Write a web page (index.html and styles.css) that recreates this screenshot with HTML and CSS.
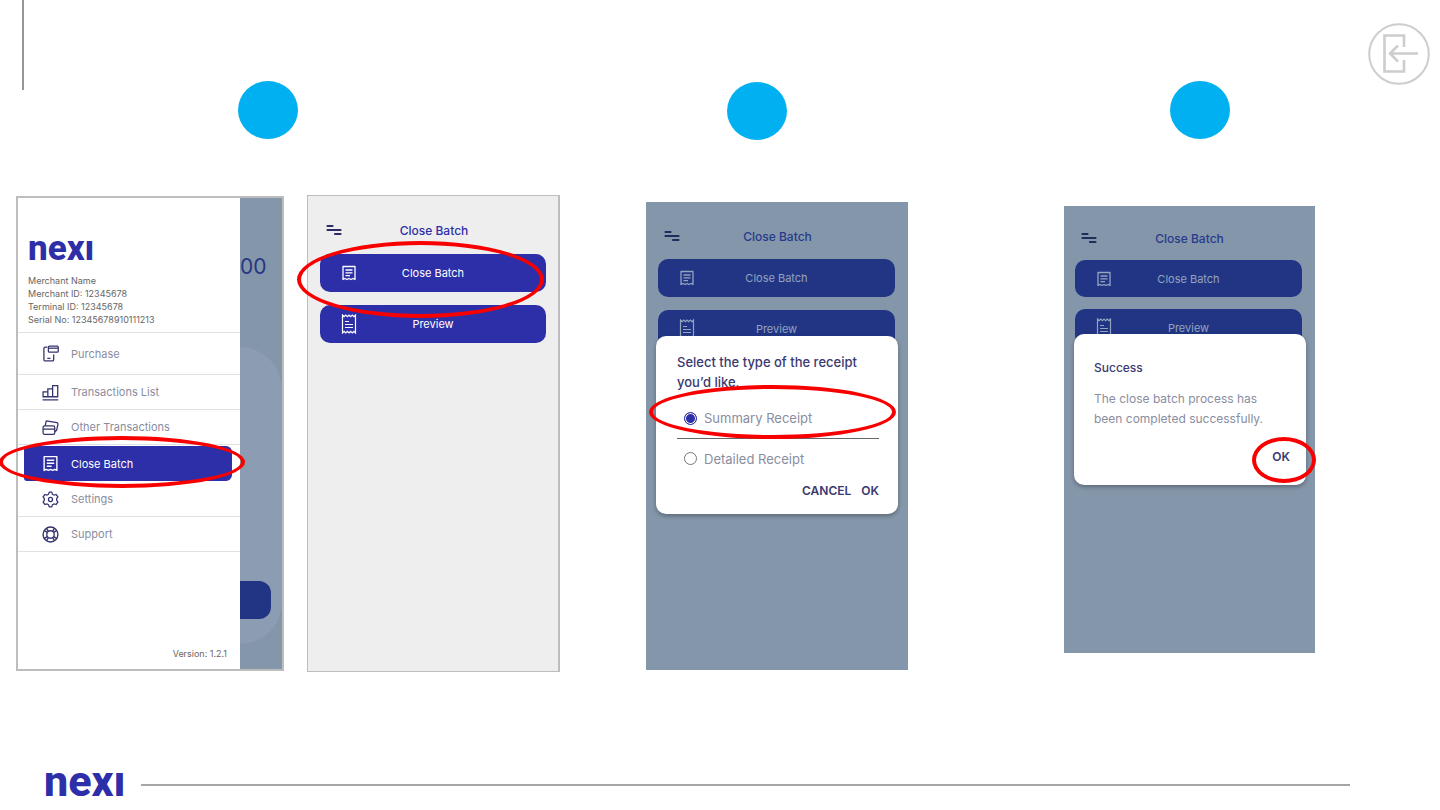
FILE: index.html
```
<!DOCTYPE html>
<html lang="en">
<head>
    <meta charset="UTF-8">
    <meta name="viewport" content="width=device-width, initial-scale=1.0">
    <title>Nexi - Close Batch</title>
    <link rel="stylesheet" href="styles.css">
</head>
<body>
    <!-- shared icons -->
    <svg class="sprite" aria-hidden="true">
        <symbol id="icon-menu" viewBox="0 0 16 12">
            <path d="M1.5 2h5M1.5 6h13M9 10h5.5" fill="none" stroke="currentColor" stroke-width="2.2" stroke-linecap="round"/>
        </symbol>
        <symbol id="icon-batch" viewBox="0 0 16 16">
            <path d="M2 1.5h12v13l-2-1-2 1-2-1-2 1-2-1-2 1zM4.500 5h7M4.500 7.800h7M4.500 10.600h4.500" fill="none" stroke="currentColor" stroke-width="1.3" stroke-linejoin="round"/>
        </symbol>
        <symbol id="icon-preview" viewBox="0 0 16 20">
            <path d="M1.5 1l1.6 1.6L4.7 1l1.7 1.6L8 1l1.6 1.6L11.3 1l1.6 1.6L14.5 1v18l-1.6-1.6-1.6 1.6-1.7-1.6L8 19l-1.6-1.6L4.7 19l-1.6-1.6L1.5 19zM4 7.5h4M4 10.5h8M4 13.5h8" fill="none" stroke="currentColor" stroke-width="1.2"/>
        </symbol>
    </svg>

    <header class="page-header">
        <div class="header-line"></div>
        <a class="exit-link" href="#" aria-label="Exit">
            <svg viewBox="0 0 62 62" fill="none" stroke="#cdcdcd">
                <circle cx="31" cy="31" r="29.8" stroke-width="2"/>
                <path d="M36 24V12.5H16.500V48.500H36V37" stroke-width="2.600"/>
                <path d="M50 30.500H22M30 22.500l-8 8 8 8" stroke-width="2.500"/>
            </svg>
        </a>
    </header>

    <main class="steps">
        <section class="step step-menu">
            <div class="marker"></div>
            <div class="phones">
                <div class="phone phone-drawer">
                    <div class="drawer">
                        <div class="logo" aria-label="nexi">nexı</div>
                        <div class="merchant">
                            <div>Merchant Name</div>
                            <div>Merchant ID: 12345678</div>
                            <div>Terminal ID: 12345678</div>
                            <div>Serial No: 12345678910111213</div>
                        </div>
                        <nav class="menu">
                            <a class="menu-item tall" href="#">
                                <svg viewBox="0 0 16 16" fill="none" stroke="currentColor" stroke-width="1.200" stroke-linejoin="round"><path d="M5 2H3Q1.800 2 1.800 3.200V13.800Q1.800 15 3 15H9.800Q11 15 11 13.800V9M5 12.500H8"/><rect x="6" y="1" width="9.300" height="5.800" rx="1"/><path d="M6 3h9"/></svg>
                                Purchase
                            </a>
                            <a class="menu-item" href="#">
                                <svg viewBox="0 0 16 16" fill="none" stroke="currentColor" stroke-width="1.200"><path d="M1 12V7.500H5.500V12M5.500 7.500V4.500H10V12M10 4.500V1.500H14.800V12M.500 12H15.300M.500 15H15.300"/></svg>
                                Transactions List
                            </a>
                            <a class="menu-item" href="#">
                                <svg viewBox="0 0 16 16" fill="none" stroke="currentColor" stroke-width="1.200" stroke-linejoin="round"><rect x="1" y="6.500" width="11" height="8" rx="1.500"/><path d="M1 9.500h11M3 6.500L4 1.800 14 3.500Q15.200 3.800 15 5L13.800 10.500 12 12"/></svg>
                                Other Transactions
                            </a>
                            <a class="menu-item active" href="#">
                                <svg><use href="#icon-batch"/></svg>
                                Close Batch
                            </a>
                            <a class="menu-item" href="#">
                                <svg viewBox="0 0 16 16" fill="none" stroke="currentColor" stroke-width="1.200" stroke-linejoin="round"><path d="M6.800 1h2.400l.6 2 1.400.8 2-.5 1.800 2.200-1.200 1.700v1.600L15 10.500l-1.800 2.200-2-.5-1.400.8-.6 2H6.800l-.6-2-1.400-.8-2 .5L1 10.500l1.200-1.700V7.200L1 5.500l1.800-2.200 2 .5L6.200 3z"/><circle cx="8" cy="8" r="1.900"/></svg>
                                Settings
                            </a>
                            <a class="menu-item" href="#">
                                <svg viewBox="0 0 16 16" fill="none" stroke="currentColor" stroke-width="1.300"><circle cx="8" cy="8" r="7"/><circle cx="8" cy="8" r="3.500"/><path d="M2.300 4.300L5 6M4.300 2.300L6 5M11.700 2.300L10 5M13.700 4.300L11 6M13.700 11.700L11 10M11.700 13.700L10 11M4.300 13.700L6 11M2.300 11.700L5 10"/></svg>
                                Support
                            </a>
                        </nav>
                        <div class="version">Version: 1.2.1</div>
                    </div>
                    <div class="behind">
                        <div class="amount">00</div>
                        <div class="behind-card">
                            <div class="behind-button"></div>
                        </div>
                    </div>
                    <div class="ring ring-menu"></div>
                </div>

                <div class="phone phone-batch">
                    <div class="topbar">
                        <button class="menu-button" aria-label="Menu"><svg><use href="#icon-menu"/></svg></button>
                        <div class="title">Close Batch</div>
                    </div>
                    <button class="action"><svg><use href="#icon-batch"/></svg>Close Batch</button>
                    <button class="action"><svg class="receipt"><use href="#icon-preview"/></svg>Preview</button>
                    <div class="ring ring-batch"></div>
                </div>
            </div>
        </section>

        <section class="step step-type">
            <div class="marker"></div>
            <div class="phone phone-type dimmed">
                <div class="topbar">
                    <button class="menu-button" aria-label="Menu"><svg><use href="#icon-menu"/></svg></button>
                    <div class="title">Close Batch</div>
                </div>
                <button class="action"><svg><use href="#icon-batch"/></svg>Close Batch</button>
                <button class="action"><svg class="receipt"><use href="#icon-preview"/></svg>Preview</button>
                <form class="dialog dialog-type">
                    <div class="dialog-title">Select the type of the receipt you’d like.</div>
                    <label class="option"><input type="radio" name="receipt" checked>Summary Receipt</label>
                    <label class="option"><input type="radio" name="receipt">Detailed Receipt</label>
                    <div class="dialog-buttons">
                        <button type="button">CANCEL</button>
                        <button type="button">OK</button>
                    </div>
                </form>
                <div class="ring ring-type"></div>
            </div>
        </section>

        <section class="step step-done">
            <div class="marker"></div>
            <div class="phone phone-done dimmed">
                <div class="topbar">
                    <button class="menu-button" aria-label="Menu"><svg><use href="#icon-menu"/></svg></button>
                    <div class="title">Close Batch</div>
                </div>
                <button class="action"><svg><use href="#icon-batch"/></svg>Close Batch</button>
                <button class="action"><svg class="receipt"><use href="#icon-preview"/></svg>Preview</button>
                <div class="dialog dialog-done">
                    <div class="dialog-title">Success</div>
                    <div class="dialog-text">The close batch process has been completed successfully.</div>
                    <div class="dialog-buttons">
                        <button type="button">OK</button>
                    </div>
                </div>
                <div class="ring ring-done"></div>
            </div>
        </section>
    </main>

    <footer class="page-footer">
        <div class="logo logo-big" aria-label="nexi">nexı</div>
        <div class="footer-line"></div>
    </footer>
</body>
</html>
```
FILE: styles.css
```
* {
    box-sizing: border-box;
}
body {
    display: flex;
    flex-direction: column;
    min-height: 100vh;
    margin: 0;
    font-family: Inter, 'Liberation Sans', sans-serif;
    font-size: 12px;
    background-color: #fff;
    overflow-x: hidden;
}
button {
    padding: 0;
    border: none;
    background: none;
    font-family: inherit;
    cursor: pointer;
}
.sprite {
    display: none;
}
.logo {
    font-family: Roboto, sans-serif;
    font-weight: 800;
    font-size: 35px;
    line-height: 34px;
    color: #2d2fa8;
}

/* header */
.page-header {
    display: flex;
    justify-content: space-between;
    align-items: flex-start;
    height: 81px;
    padding: 0 10px 0 22px;
}
.header-line {
    width: 2px;
    height: 90px;
    background-color: #969696;
}
.exit-link {
    width: 62px;
    height: 62px;
    margin-top: 23px;
}

/* steps */
.steps {
    display: grid;
    grid-template-columns: 544fr 86fr 262fr 156fr 251fr;
    align-items: start;
    padding: 0 125px 0 16px;
}
.step-type { grid-column: 3; }
.step-done { grid-column: 5; }
.marker {
    width: 60px;
    height: 58px;
    margin: 0 0 56px 222px;
    border-radius: 50%;
    background-color: #00b0f0;
}
.step-type .marker { margin: 1px 0 62px 81px; }
.step-done .marker { margin: 0 0 67px 106px; }
.phones {
    display: grid;
    grid-template-columns: 268fr 253fr;
    align-items: center;
    gap: 23px;
}
.phone {
    position: relative;
    background-color: #eee;
}

/* phone with the open drawer */
.phone-drawer {
    display: flex;
    min-height: 475px;
    border: 2px solid #bdbdbd;
    background-color: #8496a9;
}
.drawer {
    flex: none;
    display: flex;
    flex-direction: column;
    width: 222px;
    background-color: #fff;
}
.drawer .logo {
    margin: 34px 0 0 10px;
}
.merchant {
    padding: 8px 10px 6px;
    font-size: 9px;
    line-height: 13px;
    color: #666;
}
.menu {
    border-top: 1px solid #dde2e4;
}
.menu-item {
    display: flex;
    align-items: center;
    gap: 12px;
    height: 35px;
    padding-left: 24px;
    border-bottom: 1px solid #dde2e4;
    color: #8a8da0;
    font-size: 11px;
    text-decoration: none;
}
.menu-item.tall {
    height: 42px;
}
.menu-item svg {
    width: 17px;
    height: 17px;
    color: #34346e;
}
.menu-item.active {
    margin: 1px 8px 1px 6px;
    padding-left: 18px;
    border: none;
    border-radius: 3px 6px 6px 3px;
    background-color: #2d2fa8;
    color: #fff;
}
.menu-item.active svg {
    color: #fff;
}
.version {
    margin-top: auto;
    padding: 0 13px 9px;
    font-size: 9px;
    line-height: 12px;
    text-align: right;
    color: #666;
}
.behind {
    flex: 1;
    min-width: 0;
    display: flex;
    flex-direction: column;
}
.amount {
    padding-top: 55px;
    font-size: 21px;
    line-height: 28px;
    color: #263782;
}
.behind-card {
    display: flex;
    flex-direction: column;
    justify-content: flex-end;
    margin: auto 0 25px;
    height: 297px;
    padding: 0 11px 25px 0;
    border-radius: 0 42px 42px 0;
    background-color: #8c9db3;
}
.behind-button {
    height: 38px;
    border-radius: 0 12px 12px 0;
    background-color: #223585;
}

/* close batch screen */
.phone-batch {
    min-height: 477px;
    padding: 22px 12px 0;
    border: 1px solid #bdbdbd;
    border-right-width: 2px;
}
.phone-type {
    min-height: 468px;
    padding: 22px 13px 0 12px;
}
.phone-done {
    min-height: 447px;
    padding: 20px 13px 0 11px;
}
.topbar {
    display: flex;
    align-items: center;
    height: 24px;
    margin-bottom: 12px;
}
.menu-button {
    width: 16px;
    height: 12px;
    margin-left: 6px;
    color: #2c2c66;
}
.menu-button svg {
    display: block;
    width: 16px;
    height: 12px;
}
.title {
    flex: 1;
    padding-right: 20px;
    font-weight: 500;
    text-align: center;
    color: #2d2fa8;
}
.action {
    display: flex;
    align-items: center;
    justify-content: center;
    position: relative;
    width: 100%;
    height: 38px;
    margin-bottom: 13px;
    border-radius: 10px;
    background-color: #2d2fa8;
    color: #fff;
    font-size: 11px;
}
.action svg {
    position: absolute;
    left: 21px;
    width: 16px;
    height: 16px;
}
.action .receipt {
    height: 20px;
}
.dimmed { background-color: #8496a9; }
.dimmed .topbar { margin-bottom: 11px; }
.dimmed .title { color: #283a8e; }
.dimmed .menu-button { color: #1f2d5a; }
.dimmed .action {
    background-color: #223585;
    color: #93a4bd;
}
.phone-done .topbar { margin-bottom: 10px; }
.phone-done .action {
    height: 37px;
    margin-bottom: 12px;
}

/* dialogs */
.dialog {
    position: absolute;
    border-radius: 10px;
    background-color: #fff;
    box-shadow: 0 2px 4px rgba(0, 0, 0, 0.3);
    font-size: 13px;
    line-height: 20px;
}
.dialog-type {
    top: 134px;
    left: 10px;
    right: 10px;
    padding: 16px 19px 13px 21px;
}
.dialog-done {
    top: 128px;
    left: 10px;
    right: 9px;
    padding: 24px 16px 18px 20px;
    font-size: 12px;
}
.dialog-title {
    font-weight: 500;
    color: #3a3970;
}
.dialog-text {
    margin: 11px 0 18px;
    padding-right: 15px;
    color: #8a8da0;
}
.option {
    display: flex;
    align-items: center;
    gap: 7px;
    height: 40px;
    padding-left: 7px;
    color: #8a8da0;
}
.option + .option {
    border-top: 1px solid #666;
}
.dialog-title + .option {
    margin-top: 6px;
}
.option input {
    appearance: none;
    width: 13px;
    height: 13px;
    margin: 0;
    border: 1px solid #777;
    border-radius: 50%;
}
.option input:checked {
    border-color: #2d2fa8;
    background-color: #2d2fa8;
    box-shadow: inset 0 0 0 1px #fff;
}
.dialog-buttons {
    display: flex;
    justify-content: flex-end;
    gap: 10px;
}
.dialog-type .dialog-buttons {
    margin-top: 3px;
}
.dialog-buttons button {
    font-size: 12px;
    font-weight: 600;
    line-height: 20px;
    color: #3a3970;
}

/* red highlights over the screens */
.ring {
    position: absolute;
    border: 4px solid #f80000;
    border-radius: 50%;
    pointer-events: none;
}
.ring-menu {
    top: 238px;
    left: -19px;
    width: 246px;
    height: 52px;
}
.ring-batch {
    top: 45px;
    left: -11px;
    width: 247px;
    height: 77px;
}
.ring-type {
    top: 183px;
    left: 3px;
    right: 12px;
    height: 54px;
}
.ring-done {
    top: 231px;
    right: -1px;
    width: 64px;
    height: 46px;
}

/* footer */
.page-footer {
    display: flex;
    align-items: center;
    gap: 15px;
    margin-top: auto;
    padding: 0 90px 2px 44px;
}
.logo-big {
    padding-bottom: 8px;
    font-size: 43px;
    line-height: 38px;
}
.footer-line {
    flex: 1;
    height: 2px;
    background-color: #a6a6a6;
}
```
